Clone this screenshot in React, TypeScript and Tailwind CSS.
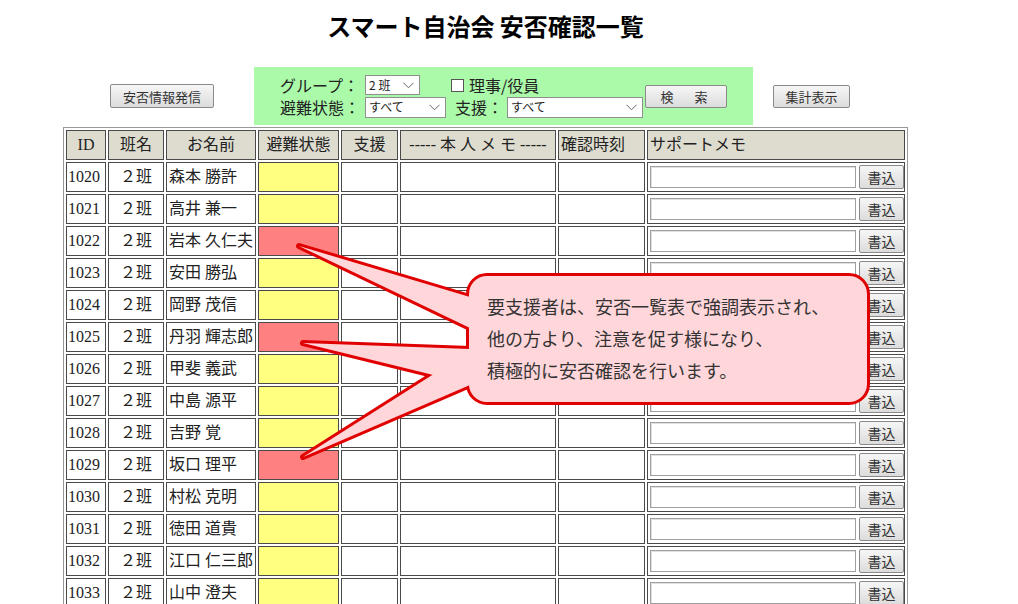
import type { ReactNode } from "react";

type Row = { id: number; name: string; alert: boolean };

const rows: Row[] = [
  { id: 1020, name: "森本 勝許", alert: false },
  { id: 1021, name: "高井 兼一", alert: false },
  { id: 1022, name: "岩本 久仁夫", alert: true },
  { id: 1023, name: "安田 勝弘", alert: false },
  { id: 1024, name: "岡野 茂信", alert: false },
  { id: 1025, name: "丹羽 輝志郎", alert: true },
  { id: 1026, name: "甲斐 義武", alert: false },
  { id: 1027, name: "中島 源平", alert: false },
  { id: 1028, name: "吉野 覚", alert: false },
  { id: 1029, name: "坂口 理平", alert: true },
  { id: 1030, name: "村松 克明", alert: false },
  { id: 1031, name: "徳田 道貴", alert: false },
  { id: 1032, name: "江口 仁三郎", alert: false },
  { id: 1033, name: "山中 澄夫", alert: false },
];

function Btn({ children, className = "" }: { children: ReactNode; className?: string }) {
  return (
    <button
      className={
        "flex items-center justify-center rounded-[2px] border border-[#8a8a8a] bg-linear-to-b from-[#f6f6f6] to-[#dcdcdc] leading-none text-[#333] " +
        className
      }
    >
      {children}
    </button>
  );
}

function FakeSelect({ label, className = "" }: { label: string; className?: string }) {
  return (
    <div
      className={
        "flex items-center justify-between border border-[#8f8f8f] bg-white pl-[3px] pr-[5px] text-[12px] leading-none text-[#222] " +
        className
      }
    >
      <span>{label}</span>
      <svg width="11" height="7" viewBox="0 0 11 7">
        <polyline points="0.5,0.8 5.5,5.8 10.5,0.8" fill="none" stroke="#666" strokeWidth="1" />
      </svg>
    </div>
  );
}

const cell = "border border-[#4a4a4a] h-[30px] p-0 align-middle";
const head = cell + " bg-[#dddccf] font-normal";

export default function App() {
  return (
    <div className="relative min-h-[604px] bg-white font-['Liberation_Serif','Noto_Sans_CJK_JP',serif] text-[16px] text-[#222]">
      <div className="ml-[63px] w-[845px] pt-[10px]">
        <h1 className="h-[32px] text-center font-['Noto_Sans_CJK_JP',sans-serif] text-[24px] font-bold leading-[32px] text-black">
          スマート自治会 安否確認一覧
        </h1>

        {/* toolbar */}
        <div className="mt-[25px] flex items-center font-['Noto_Sans_CJK_JP',sans-serif]">
          <Btn className="ml-[47px] h-[24px] w-[104px] text-[13px]">安否情報発信</Btn>
          <div className="ml-[40px] flex h-[58px] w-[499px] items-center bg-[#aafaaa] pl-[26px]">
            <div className="flex w-[363px] flex-col">
              <div className="flex h-[22px] items-center">
                <span>グループ：</span>
                <FakeSelect label="2 班" className="ml-[6px] h-[20px] w-[55px]" />
                <span className="ml-[31px] h-[13px] w-[13px] border border-[#555] bg-white" />
                <span className="ml-[5px]">理事/役員</span>
              </div>
              <div className="flex h-[22px] items-center">
                <span>避難状態：</span>
                <FakeSelect label="すべて" className="ml-[5px] h-[21px] w-[81px]" />
                <span className="ml-[9px]">支援：</span>
                <FakeSelect label="すべて" className="ml-[4px] h-[21px] w-[136px]" />
              </div>
            </div>
            <Btn className="ml-[2px] h-[23px] w-[82px] text-[13px] tracking-[4px]">検　索</Btn>
          </div>
          <Btn className="ml-[20px] h-[23px] w-[77px] text-[13px]">集計表示</Btn>
        </div>

        {/* table */}
        <table className="mt-[2px] w-[845px] table-fixed border-separate border-spacing-[2px] border border-[#999]">
          <thead>
            <tr>
              <th className={head + " w-[40px] text-center"}>ID</th>
              <th className={head + " w-[56px] text-center"}>班名</th>
              <th className={head + " w-[90px] text-center"}>お名前</th>
              <th className={head + " w-[81px] text-center"}>避難状態</th>
              <th className={head + " w-[57px] text-center"}>支援</th>
              <th className={head + " w-[156px] text-center"}>----- 本 人 メ モ -----</th>
              <th className={head + " w-[87px] pl-[2px] text-left"}>確認時刻</th>
              <th className={head + " pl-[2px] text-left"}>サポートメモ</th>
            </tr>
          </thead>
          <tbody>
            {rows.map((r) => (
              <tr key={r.id}>
                <td className={cell + " pl-[1px]"}>{r.id}</td>
                <td className={cell + " text-center"}>２班</td>
                <td className={cell + " overflow-hidden whitespace-nowrap pl-[2px]"}>{r.name}</td>
                <td className={cell + (r.alert ? " bg-[#ff8080]" : " bg-[#ffff80]")} />
                <td className={cell} />
                <td className={cell} />
                <td className={cell} />
                <td className={cell}>
                  <div className="flex items-center pl-[2px]">
                    <div className="h-[22px] w-[207px] border border-[#a0a0a0] bg-white shadow-[inset_1px_1px_0_#e0e0e0]" />
                    <Btn className="ml-[3px] h-[24px] w-[45px] font-['Noto_Sans_CJK_JP',sans-serif] text-[14px]">書込</Btn>
                  </div>
                </td>
              </tr>
            ))}
          </tbody>
        </table>
      </div>

      {/* callout */}
      <svg className="pointer-events-none absolute left-0 top-0" width="1018" height="604">
        <g fill="none" stroke="#e00000" strokeWidth="6" strokeLinejoin="round">
          <polygon points="299,246 470,297 470,328" />
          <polygon points="303,343 470,349 470,384" />
          <polygon points="303,457 470,351 470,385" />
          <rect x="469" y="276" width="398" height="126" rx="18" />
        </g>
        <g fill="#ffd6da">
          <polygon points="299,246 470,297 470,328" />
          <polygon points="303,343 470,349 470,384" />
          <polygon points="303,457 470,351 470,385" />
          <rect x="469" y="276" width="398" height="126" rx="18" />
        </g>
      </svg>
      <div className="pointer-events-none absolute left-[487px] top-[290px] font-['Noto_Sans_CJK_JP',sans-serif] text-[18px] leading-[32px] text-[#333]">
        <div>要支援者は、安否一覧表で強調表示され、</div>
        <div>他の方より、注意を促す様になり、</div>
        <div>積極的に安否確認を行います。</div>
      </div>
    </div>
  );
}
